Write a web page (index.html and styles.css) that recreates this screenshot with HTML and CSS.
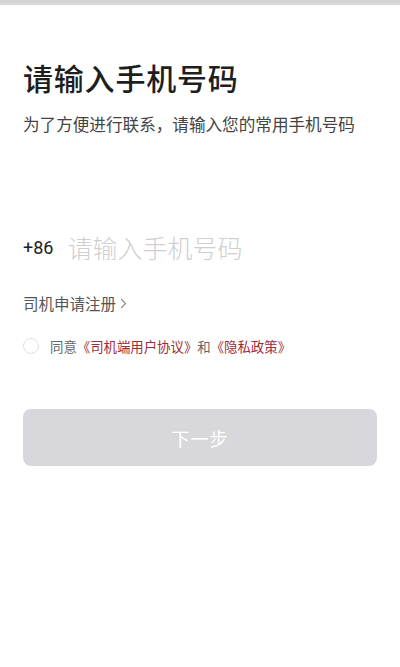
FILE: index.html
```html
<!DOCTYPE html>
<html lang="zh-CN">
<head>
<meta charset="utf-8">
<meta name="viewport" content="width=device-width, initial-scale=1">
<title>请输入手机号码</title>
<link rel="stylesheet" href="styles.css">
</head>
<body>
<div class="status-strip"></div>
<main class="page">
  <h1 class="title">请输入手机号码</h1>
  <p class="subtitle">为了方便进行联系，请输入您的常用手机号码</p>

  <div class="phone-row">
    <span class="prefix">+86</span>
    <input class="phone-input" type="tel" placeholder="请输入手机号码">
  </div>

  <a class="register" href="#">司机申请注册<svg class="chev" width="7" height="11" viewBox="0 0 7 11"><path d="M1.2 1 L5.5 5.5 L1.2 10" fill="none" stroke="#8a8a8a" stroke-width="1.1"/></svg></a>

  <label class="agree">
    <span class="radio"></span>
    <span class="agree-text">同意<span class="link">《司机端用户协议》</span>和<span class="link">《隐私政策》</span></span>
  </label>

  <button class="next" type="button">下一步</button>
</main>
</body>
</html>
```

FILE: styles.css
```css
* { box-sizing: border-box; }
html, body { margin: 0; padding: 0; background: #fff; }
body {
  font-family: "Noto Sans CJK SC", "Noto Sans", sans-serif;
  color: #222;
  width: 400px;
  height: 667px;
  overflow: hidden;
}
.status-strip {
  height: 5px;
  background: linear-gradient(#cfcfcf, #dcdcdc);
}
.page {
  padding: 0 23px;
  display: flex;
  flex-direction: column;
}
.title {
  margin: 52px 0 0;
  font-size: 30px;
  line-height: 40px;
  font-weight: 500;
  color: #1e1e1e;
  letter-spacing: 0.8px;
}
.subtitle {
  margin: 15px 0 0;
  font-size: 16.6px;
  line-height: 24px;
  color: #444;
}
.phone-row {
  margin-top: 93px;
  display: flex;
  align-items: center;
  height: 36px;
}
.prefix {
  font-family: "Roboto", "Noto Sans", sans-serif;
  font-size: 18px;
  color: #222;
  margin-right: 14px;
}
.phone-input {
  border: none;
  outline: none;
  padding: 0;
  flex: 1;
  font-family: "Noto Sans CJK SC", sans-serif;
  font-weight: 300;
  font-size: 25px;
  color: #222;
  background: transparent;
}
.phone-input::placeholder { color: #cfcfcf; }
.register {
  margin-top: 27px;
  font-size: 15.5px;
  line-height: 22px;
  color: #555;
  text-decoration: none;
  display: flex;
  align-items: center;
  gap: 4px;
}
.agree {
  margin-top: 22px;
  display: flex;
  align-items: center;
  height: 20px;
}
.radio {
  width: 16px;
  height: 16px;
  border-radius: 50%;
  border: 1px solid #e0e0e0;
  margin-right: 11px;
}
.agree-text {
  font-size: 13.4px;
  color: #666;
}
.link { color: #a02b3c; }
.next {
  margin-top: 53px;
  height: 57px;
  border: none;
  border-radius: 8px;
  background: #d8d8dc;
  color: #fff;
  font-family: "Noto Sans CJK SC", sans-serif;
  font-size: 18px;
  letter-spacing: 1px;
}
```
